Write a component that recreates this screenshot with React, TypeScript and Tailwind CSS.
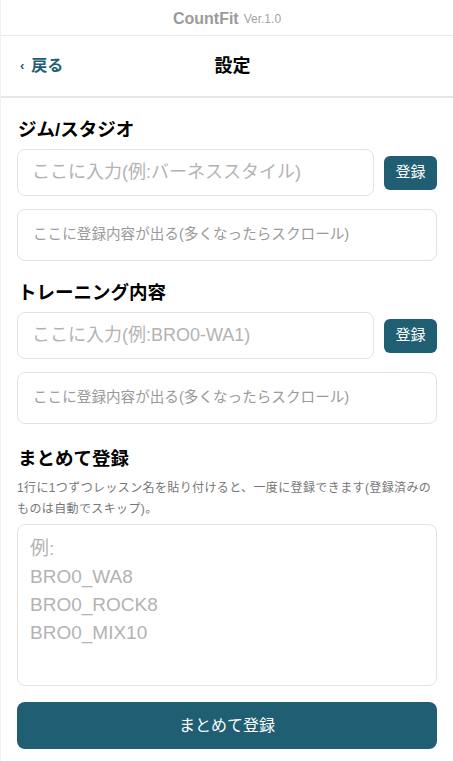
const font = { fontFamily: '"Liberation Sans", "Noto Sans CJK JP", sans-serif' }

function AddRow({ placeholder }: { placeholder: string }) {
  return (
    <div className="flex items-center gap-[10px]">
      <input
        placeholder={placeholder}
        className="h-[47px] flex-1 rounded-lg border border-[#e2e2e2] bg-white px-[14px] text-[18px] text-gray-800 outline-none placeholder:text-[#b3b3b3]"
      />
      <button className="h-[34px] w-[53px] rounded-md bg-[#1f5e73] text-[15px] text-white">
        登録
      </button>
    </div>
  )
}

function ListBox() {
  return (
    <div className="mt-[13px] flex h-[52px] items-center rounded-lg border border-[#e2e2e2] px-[15px] text-[14.6px] text-[#9a9a9a]">
      ここに登録内容が出る(多くなったらスクロール)
    </div>
  )
}

export default function App() {
  return (
    <div style={font} className="min-h-[761px] w-full border-l border-[#f0f0f0] bg-white">
      <div className="flex h-[36px] items-center justify-center border-b border-[#e8e8e8] pt-[2px]">
        <span className="text-[16px] font-bold text-[#9a9a9a]">CountFit</span>
        <span className="ml-[5px] text-[12px] text-[#a3a3a3]">Ver.1.0</span>
      </div>
      <div className="relative flex h-[62px] items-center justify-center border-b-2 border-[#e6e6e6]">
        <button className="absolute left-[19px] flex items-center gap-[7px] text-[16px] font-bold text-[#1f5e73]">
          <span className="text-[13px]">‹</span>
          <span>戻る</span>
        </button>
        <h1 className="ml-[11px] text-[18px] font-bold text-black">設定</h1>
      </div>

      <div className="px-[16px] pt-[18px]">
        <h2 className="mb-[5px] ml-[1px] text-[18.5px] font-bold leading-[28px] text-black">ジム/スタジオ</h2>
        <AddRow placeholder="ここに入力(例:バーネススタイル)" />
        <ListBox />

        <h2 className="mb-[5px] ml-[1px] mt-[18px] text-[18.5px] font-bold leading-[28px] text-black">トレーニング内容</h2>
        <AddRow placeholder="ここに入力(例:BRO0-WA1)" />
        <ListBox />

        <h2 className="ml-[1px] mt-[21px] text-[18.5px] font-bold leading-[28px] text-black">まとめて登録</h2>
        <p className="mt-[5px] text-[12px] leading-[21px] tracking-[0.38px] text-[#777]">
          1行に1つずつレッスン名を貼り付けると、一度に登録できます(登録済みのものは自動でスキップ)。
        </p>
        <textarea
          placeholder={"例:\nBRO0_WA8\nBRO0_ROCK8\nBRO0_MIX10"}
          className="mt-[4px] block h-[162px] w-full resize-none rounded-lg border border-[#e2e2e2] px-[12px] py-[10px] text-[19px] leading-[28px] outline-none placeholder:text-[#b3b3b3]"
        />
        <button className="mt-[16px] h-[47px] w-full rounded-lg bg-[#1f5e73] text-[16px] text-white">
          まとめて登録
        </button>
      </div>
    </div>
  )
}
